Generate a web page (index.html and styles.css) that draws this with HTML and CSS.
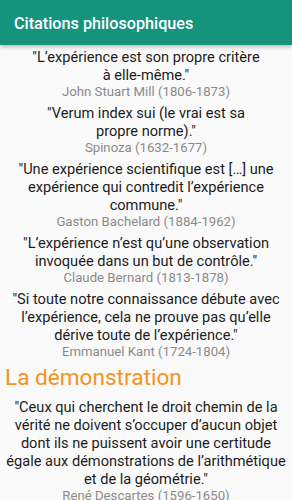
FILE: index.html
```html
<!DOCTYPE html>
<html lang="fr">
<head>
    <meta charset="UTF-8" />
    <meta name="viewport" content="width=device-width, initial-scale=1.0"/>
    <title>Citations philosophiques</title>
    <link rel="stylesheet" href="styles.css">
</head>
<body>
    <div class="toolbar">Citations philosophiques</div>
    <div class="content">
        <div class="quote">
            <p class="quote-text">"L’expérience est son propre critère <span class="nowrap">à elle-même."</span></p>
            <p class="quote-author">John Stuart Mill (1806-1873)</p>
        </div>
        <div class="quote">
            <p class="quote-text">"Verum index sui (le vrai est sa <span class="nowrap">propre norme)."</span></p>
            <p class="quote-author">Spinoza (1632-1677)</p>
        </div>
        <div class="quote">
            <p class="quote-text">"Une expérience scientifique est […] une expérience qui contredit l’expérience commune."</p>
            <p class="quote-author">Gaston Bachelard (1884-1962)</p>
        </div>
        <div class="quote">
            <p class="quote-text">"L’expérience n’est qu’une observation invoquée dans un but de contrôle."</p>
            <p class="quote-author">Claude Bernard (1813-1878)</p>
        </div>
        <div class="quote">
            <p class="quote-text">"Si toute notre connaissance débute avec l’expérience, cela ne prouve pas qu’elle dérive toute de l’expérience."</p>
            <p class="quote-author">Emmanuel Kant (1724-1804)</p>
        </div>

        <h2 class="section-title">La démonstration</h2>

        <div class="quote">
            <p class="quote-text">"Ceux qui cherchent le droit chemin de la vérité ne doivent s’occuper d’aucun objet dont ils ne puissent avoir une certitude égale aux démonstrations de l’arithmétique et de la géométrie."</p>
            <p class="quote-author">René Descartes (1596-1650)</p>
        </div>
    </div>
</body>
</html>
```

FILE: styles.css
```css
* {
    box-sizing: border-box;
}

body {
    margin: 0;
    font-family: Roboto, 'Noto Sans', sans-serif;
    background: #fafafa;
    overflow: hidden;
}

.toolbar {
    height: 45px;
    background: #16937c;
    color: #fff;
    font-size: 16.2px;
    font-weight: 500;
    display: flex;
    align-items: center;
    padding: 2px 0 0 14px;
    box-shadow: 0 2px 4px rgba(0, 0, 0, 0.25);
    position: relative;
}

.content {
    padding: 3px 2px 0;
}

.quote {
    text-align: center;
    margin-bottom: 5px;
}

.quote-text {
    margin: 0;
    font-size: 14.6px;
    line-height: 18px;
    color: #1c1c1c;
}

.quote-author {
    margin: 0;
    font-size: 13.2px;
    line-height: 15px;
    color: #8a8a8a;
}

.nowrap {
    white-space: nowrap;
}

.section-title {
    margin: 0 0 6px 3px;
    font-size: 22.6px;
    font-weight: 400;
    line-height: 28px;
    color: #f39321;
}
```
